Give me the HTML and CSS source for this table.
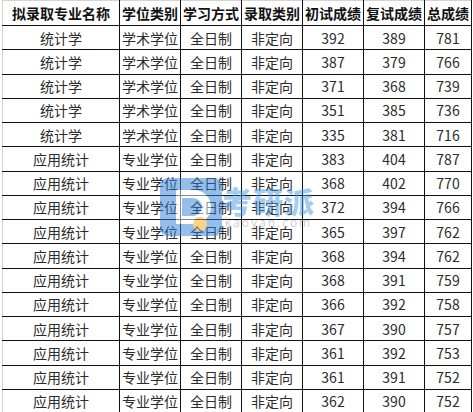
FILE: index.html
```html
<!DOCTYPE html>
<html lang="zh">
<head>
<meta charset="utf-8">
<link rel="stylesheet" href="styles.css">
</head>
<body>
<div class="sheet">
<table class="scores">
  <colgroup>
    <col class="c-name"><col class="c-mid"><col class="c-mid"><col class="c-mid"><col class="c-mid"><col class="c-mid"><col class="c-last">
  </colgroup>
  <thead>
    <tr><th>拟录取专业名称</th><th>学位类别</th><th>学习方式</th><th>录取类别</th><th>初试成绩</th><th>复试成绩</th><th>总成绩</th></tr>
  </thead>
  <tbody>
    <tr><td>统计学</td><td>学术学位</td><td>全日制</td><td>非定向</td><td>392</td><td>389</td><td>781</td></tr>
    <tr><td>统计学</td><td>学术学位</td><td>全日制</td><td>非定向</td><td>387</td><td>379</td><td>766</td></tr>
    <tr><td>统计学</td><td>学术学位</td><td>全日制</td><td>非定向</td><td>371</td><td>368</td><td>739</td></tr>
    <tr><td>统计学</td><td>学术学位</td><td>全日制</td><td>非定向</td><td>351</td><td>385</td><td>736</td></tr>
    <tr><td>统计学</td><td>学术学位</td><td>全日制</td><td>非定向</td><td>335</td><td>381</td><td>716</td></tr>
    <tr><td>应用统计</td><td>专业学位</td><td>全日制</td><td>非定向</td><td>383</td><td>404</td><td>787</td></tr>
    <tr><td>应用统计</td><td>专业学位</td><td>全日制</td><td>非定向</td><td>368</td><td>402</td><td>770</td></tr>
    <tr><td>应用统计</td><td>专业学位</td><td>全日制</td><td>非定向</td><td>372</td><td>394</td><td>766</td></tr>
    <tr><td>应用统计</td><td>专业学位</td><td>全日制</td><td>非定向</td><td>365</td><td>397</td><td>762</td></tr>
    <tr><td>应用统计</td><td>专业学位</td><td>全日制</td><td>非定向</td><td>368</td><td>394</td><td>762</td></tr>
    <tr><td>应用统计</td><td>专业学位</td><td>全日制</td><td>非定向</td><td>368</td><td>391</td><td>759</td></tr>
    <tr><td>应用统计</td><td>专业学位</td><td>全日制</td><td>非定向</td><td>366</td><td>392</td><td>758</td></tr>
    <tr><td>应用统计</td><td>专业学位</td><td>全日制</td><td>非定向</td><td>367</td><td>390</td><td>757</td></tr>
    <tr><td>应用统计</td><td>专业学位</td><td>全日制</td><td>非定向</td><td>361</td><td>392</td><td>753</td></tr>
    <tr><td>应用统计</td><td>专业学位</td><td>全日制</td><td>非定向</td><td>361</td><td>391</td><td>752</td></tr>
    <tr><td>应用统计</td><td>专业学位</td><td>全日制</td><td>非定向</td><td>362</td><td>390</td><td>752</td></tr>
  </tbody>
</table>
<div class="watermark">
  <svg class="wm-logo" width="62" height="58" viewBox="0 0 62 58">
    <rect x="0" y="0" width="62" height="58" rx="8" fill="#2d7fd6"/>
    <path d="M16 12 H34 A16 16 0 0 1 34 46 H16 Z" fill="#ffffff"/>
    <path d="M22 20 H33 A9 9 0 0 1 33 38 H22 Z" fill="#2d7fd6"/>
    <circle cx="40" cy="46" r="7" fill="#f5a623"/>
  </svg>
  <div class="wm-text">
    <span class="wm-name">考研派</span>
    <span class="wm-url">kaoyan.com</span>
  </div>
</div>
</div>
</body>
</html>
```
FILE: styles.css
```css
html, body {
  margin: 0;
  padding: 0;
  background: #ffffff;
}
.sheet {
  position: relative;
  width: 473px;
  height: 412px;
  overflow: hidden;
}
.scores {
  margin-left: 2px;
  border-collapse: collapse;
  table-layout: fixed;
  width: 470px;
  font-family: "Noto Sans CJK SC", "Microsoft YaHei", sans-serif;
  font-size: 14px;
  color: #2b2b2b;
  border-left: 1px solid #d4d4d4;
  border-top: 1px solid #d4d4d4;
}
.c-name { width: 117px; }
.c-mid { width: 61px; }
.c-last { width: 47px; }
.scores th,
.scores td {
  border: 1px solid #111111;
  padding: 0;
  text-align: center;
  white-space: nowrap;
  overflow: hidden;
  line-height: 20px;
}
.scores tr > :first-child { border-left-color: #d4d4d4; }
.scores thead th {
  border-top-color: #d4d4d4;
  font-weight: bold;
  color: #111111;
  height: 24px;
}
.scores tbody td { height: 23.25px; }
.watermark {
  position: absolute;
  left: 160px;
  top: 178px;
  display: flex;
  align-items: flex-start;
  gap: 0;
  opacity: 0.5;
  pointer-events: none;
}
.wm-text {
  display: flex;
  flex-direction: column;
  align-items: center;
  padding-top: 6px;
}
.wm-name {
  font-family: "Noto Sans CJK SC", sans-serif;
  font-weight: 900;
  font-size: 30px;
  line-height: 32px;
  letter-spacing: 1px;
  color: #4a9be8;
}
.wm-url {
  font-family: "Open Sans", sans-serif;
  font-size: 12px;
  line-height: 14px;
  letter-spacing: 2px;
  color: #9aa4b0;
}
```
